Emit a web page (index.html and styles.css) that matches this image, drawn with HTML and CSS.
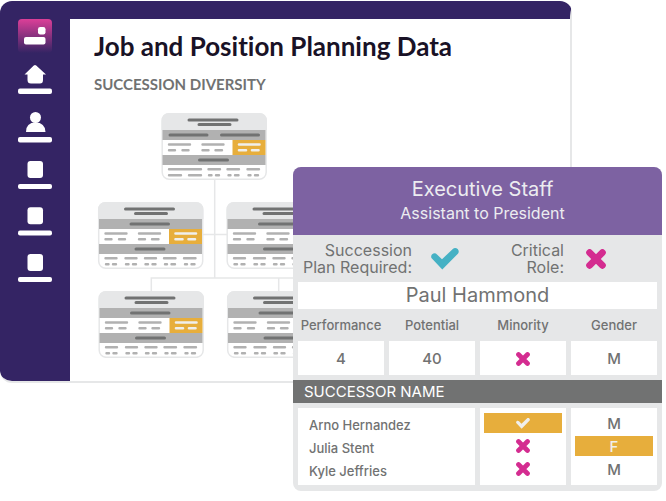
FILE: index.html
```html
<!DOCTYPE html>
<html lang="en">
<head>
<meta charset="utf-8">
<meta name="viewport" content="width=device-width, initial-scale=1">
<title>Job and Position Planning Data</title>
<link rel="stylesheet" href="styles.css">
</head>
<body>
<svg class="defs" aria-hidden="true">
  <defs>
    <linearGradient id="logo-fade" x1="0" y1="0" x2="0" y2="1">
      <stop offset="0" stop-color="#dc3f98"/>
      <stop offset="1" stop-color="#342464"/>
    </linearGradient>
    <symbol id="cross" viewBox="0 0 20 20">
      <path d="M3.600 3.600 16.400 16.400M16.400 3.600 3.600 16.400" fill="none" stroke="currentColor" stroke-width="6.800" stroke-linecap="round"/>
    </symbol>
    <symbol id="check" viewBox="0 0 28 22">
      <path d="M.9 10.600C-.3 9.200 0 7.500 1.200 6.300C2.600 5 4.700 5 6 6.400L11 11.300L21.800.9C23.200-.3 25.300-.2 26.700 1C28 2.400 28.100 4.300 26.900 5.700L11.300 21.500Z" fill="currentColor"/>
    </symbol>
    <!-- Parts shared by every chart card; the origin is the left end of the first grey band -->
    <g id="card-base">
      <rect x=".7" y="-16.300" width="104" height="65.600" rx="7" fill="#fff" stroke="#e6e7e8" stroke-width="1.500"/>
      <path d="M0 0V-9Q0-17 8-17H97.400Q105.400-17 105.400-9V0Z" fill="#e6e7e8"/>
      <path d="M1 0H104V10H1ZM1 25H104V35H1Z" fill="#b1b1b1"/>
      <path d="M27.500-10H75.500M37.500-5.500H68.500M38-5.500H68M38 30H66" class="ink-dark"/>
      <path d="M7.500 14.500H28.500M41 14.500H62M7.500 20.300H13.500M21 20.300H27M41 20.300H47M54 20.300H60.500M66 39.300H77.500M86 39.300H97.500M67 45.300H69M73.500 45.300H77M87 45.300H89M93.500 45.300H96.500" class="ink-light"/>
    </g>
    <g id="card-single">
      <use href="#card-base"/>
      <path d="M33 5H70.500" class="ink-dark"/>
      <path d="M7.500 39.300H18.500M27.500 39.300H38.500M47 39.300H58M8 45.300H10.500M15 45.300H18M28 45.300H30.500M35 45.300H38M47.500 45.300H50M54.500 45.300H57.500" class="ink-light"/>
    </g>
    <g id="card-double">
      <use href="#card-base"/>
      <path d="M8.500 5H45.500M60 5H97" class="ink-dark"/>
      <path d="M7.500 39.300H39.500M47 39.300H58.500M7.500 45.300H19.500M27.500 45.300H39.500M47.500 45.300H50M54.500 45.300H57.500" class="ink-light"/>
    </g>
    <g id="card-flag">
      <path d="M71 10H104V25H71Z" fill="#e7ae3c"/>
      <path d="M77.500 14.500H98M77.500 20.300H84.500M90.500 20.300H97" class="ink-pale"/>
    </g>
  </defs>
</svg>

<main class="stage">
  <section class="window">
    <nav class="sidebar" aria-label="Sections">
      <svg class="logo" viewBox="0 0 34 34" aria-hidden="true">
        <rect width="34" height="34" rx="4" fill="url(#logo-fade)"/>
        <rect x="20" y="8" width="7.500" height="7.500" rx="2.200" fill="#fff"/>
        <rect x="6" y="18" width="21.500" height="7.500" rx="2" fill="#fff"/>
      </svg>
      <a class="nav-item" href="#home" aria-label="Home">
        <svg viewBox="0 0 34 31"><path d="M15.800.5Q17 -.5 18.200.5L28 9.600H25V15Q25 18.500 22 18.500H13Q9.500 18.500 9.500 15V9.600H6.500Z"/><rect y="23.500" width="34" height="5.500" rx="2"/></svg>
      </a>
      <a class="nav-item" href="#people" aria-label="People">
        <svg viewBox="0 0 34 31"><circle cx="17.500" cy="5.500" r="5.500"/><path d="M8 20Q8 10.500 17.500 10.500T27.500 20Z"/><rect y="25" width="34" height="5.500" rx="2"/></svg>
      </a>
      <a class="nav-item" href="#roles" aria-label="Roles">
        <svg viewBox="0 0 34 31"><rect x="9.500" y="2" width="15.500" height="17" rx="3"/><rect y="25" width="34" height="5" rx="2"/></svg>
      </a>
      <a class="nav-item" href="#teams" aria-label="Teams">
        <svg viewBox="0 0 34 31"><rect x="9.500" y="1.200" width="15.500" height="17" rx="3"/><rect y="24.500" width="34" height="5" rx="2"/></svg>
      </a>
      <a class="nav-item" href="#reports" aria-label="Reports">
        <svg viewBox="0 0 34 31"><rect x="9.500" y="1" width="15.500" height="17" rx="3"/><rect y="24" width="34" height="5" rx="2"/></svg>
      </a>
    </nav>
    <div class="content">
      <h1>Job and Position Planning Data</h1>
      <h2>SUCCESSION DIVERSITY</h2>
      <svg class="chart" viewBox="94 112 256 246" aria-hidden="true">
        <path d="M214.700 179V278M203 234.500H228M151.300 291V278H350M278.700 278V291" fill="none" stroke="#e6e7e8" stroke-width="1.500"/>
        <g transform="translate(161.500 130)"><use href="#card-double"/><use href="#card-flag"/></g>
        <g transform="translate(98 219)"><use href="#card-single"/><use href="#card-flag"/></g>
        <g transform="translate(226.500 219)"><use href="#card-single"/></g>
        <g transform="translate(98.500 308)"><use href="#card-single"/><use href="#card-flag"/></g>
        <g transform="translate(227 308)"><use href="#card-single"/></g>
      </svg>
    </div>
  </section>

  <article class="panel">
    <header class="panel-head">
      <h2>Executive Staff</h2>
      <p>Assistant to President</p>
    </header>
    <div class="facts">
      <p>Succession<br>Plan Required:</p>
      <svg class="mark-check" role="img" aria-label="Yes"><use href="#check"/></svg>
      <p>Critical<br>Role:</p>
      <svg class="mark-cross" role="img" aria-label="No"><use href="#cross"/></svg>
    </div>
    <h3 class="person">Paul Hammond</h3>
    <table class="ratings">
      <thead>
        <tr><th scope="col">Performance</th><th scope="col">Potential</th><th scope="col">Minority</th><th scope="col">Gender</th></tr>
      </thead>
      <tbody>
        <tr><td>4</td><td>40</td><td><svg class="small-cross" role="img" aria-label="No"><use href="#cross"/></svg></td><td>M</td></tr>
      </tbody>
    </table>
    <table class="successors">
      <caption>SUCCESSOR NAME</caption>
      <tbody>
        <tr>
          <th scope="row" colspan="2">Arno Hernandez</th>
          <td><span class="value flagged"><svg class="small-check" role="img" aria-label="Yes"><use href="#check"/></svg></span></td>
          <td><span class="value">M</span></td>
        </tr>
        <tr>
          <th scope="row" colspan="2">Julia Stent</th>
          <td><span class="value"><svg class="small-cross" role="img" aria-label="No"><use href="#cross"/></svg></span></td>
          <td><span class="value flagged">F</span></td>
        </tr>
        <tr>
          <th scope="row" colspan="2">Kyle Jeffries</th>
          <td><span class="value"><svg class="small-cross" role="img" aria-label="No"><use href="#cross"/></svg></span></td>
          <td><span class="value">M</span></td>
        </tr>
      </tbody>
    </table>
  </article>
</main>
</body>
</html>
```
FILE: styles.css
```css
* { box-sizing: border-box; }

body {
  margin: 0;
  background: #fff;
  color: #717272;
  font-family: Inter, "Noto Sans", sans-serif;
}

h1, h2, h3, p { margin: 0; }

.defs { position: absolute; width: 0; height: 0; }

.stage {
  position: relative;
  min-height: 100vh;
  padding: 1px 94px 0 0;
}

/* Background window */
.window {
  display: flex;
  border-top: 18px solid #342464;
  border-right: 2px solid #e6e7e8;
  border-bottom: 2px solid #e6e7e8;
  border-radius: 12px 12px 4px 12px;
  overflow: hidden;
}

.sidebar {
  display: flex;
  flex: 0 0 70px;
  flex-direction: column;
  align-items: center;
  gap: 16px;
  margin-bottom: -2px;
  background: #342464;
  border-bottom-left-radius: 12px;
}

.logo {
  width: 34px;
  height: 34px;
  margin-bottom: -4px;
}

.nav-item { display: block; height: 31px; }

.nav-item svg {
  display: block;
  width: 34px;
  height: 31px;
  fill: #fff;
}

.content {
  flex: 1;
  min-width: 0;
  padding: 12px 24px 23px;
}

.content h1 {
  color: #191226;
  font: 700 26px/30px Lato, sans-serif;
  font-variant-ligatures: none;
  white-space: nowrap;
}

.content h2 {
  margin: 12px 0 17px;
  font: 700 15px/22px Lato, sans-serif;
}

.chart {
  display: block;
  width: 256px;
  height: 246px;
}

.ink-dark, .ink-light, .ink-pale {
  fill: none;
  stroke-linecap: round;
}
.ink-dark { stroke: #717272; stroke-width: 3px; }
.ink-light { stroke: #b1b1b1; stroke-width: 2.4px; }
.ink-pale { stroke: #f0efec; stroke-width: 2.6px; }

/* Detail panel laid over the window */
.panel {
  position: absolute;
  top: 167px;
  right: 4px;
  left: 293px;
  padding-bottom: 6px;
  background: #e6e7e8;
  border-radius: 8px;
  overflow: hidden;
}

.panel-head {
  padding: 9px 0 11px;
  background: #7d62a2;
  color: #ececf0;
  text-align: center;
}
.panel-head h2 { padding-left: 10px; font-size: 20px; font-weight: 400; line-height: 26px; }
.panel-head p { padding-left: 10px; font-size: 16px; line-height: 22px; }

.facts {
  display: grid;
  grid-template-columns: 119fr 48fr 104fr 98fr;
  align-items: center;
  height: 47px;
  font-size: 16px;
  line-height: 17px;
  text-align: right;
}

.mark-check { width: 28px; height: 22px; margin-left: 19px; color: #45b1c4; }
.mark-cross { width: 20px; height: 20px; margin-left: 22px; color: #d42c90; }

.person {
  margin: 0 5px;
  background: #fff;
  font-size: 20px;
  font-weight: 400;
  line-height: 27px;
  text-align: center;
}

table {
  width: 100%;
  border-spacing: 5px 0;
  table-layout: fixed;
}
th, td { padding: 0; }
td { background: #fff; text-align: center; }

.ratings { margin-bottom: 5px; }
.ratings th { height: 32px; font-size: 13px; font-weight: 500; }
.ratings td { height: 34px; font-size: 15px; font-weight: 500; }

.successors caption {
  margin-bottom: 5px;
  padding-left: 11px;
  background: #717272;
  color: #fff;
  font-size: 15px;
  line-height: 23px;
  text-align: left;
}
.successors th {
  height: 23px;
  padding-left: 11px;
  background: #fff;
  font-size: 13px;
  font-weight: 500;
  text-align: left;
}
.successors td {
  padding: 0 4px;
  font-size: 15px;
  font-weight: 500;
  vertical-align: top;
}
.successors tr:first-child > * { padding-top: 5px; height: 28px; }
.successors tr:last-child > * { padding-bottom: 3px; height: 26px; }

.value {
  display: flex;
  align-items: center;
  justify-content: center;
  height: 20px;
}
.flagged { background: #e7ae3c; color: #f0efec; }

.small-cross { width: 14px; height: 14px; color: #d42c90; vertical-align: middle; }
.small-check { width: 14px; height: 11px; }
```
